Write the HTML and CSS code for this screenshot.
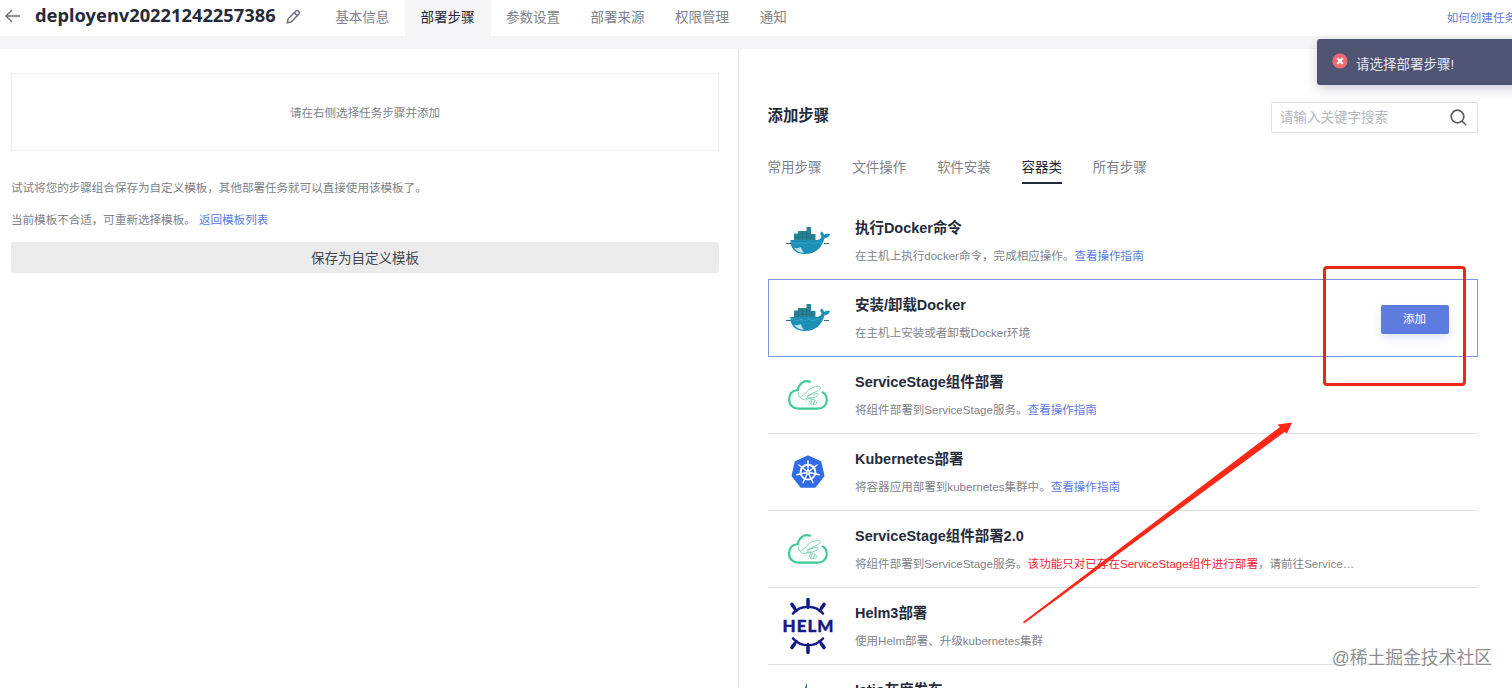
FILE: index.html
```html
<!DOCTYPE html>
<html lang="zh-CN">
<head>
  <meta charset="UTF-8">
  <meta name="viewport" content="width=device-width, initial-scale=1.0">
  <title>部署步骤</title>
  <link rel="stylesheet" href="styles.css">
</head>
<body>
  <!-- shared icons -->
  <svg width="0" height="0" class="sprite">
    <symbol id="docker" viewBox="0 0 44 28">
      <path fill="#2b8496" d="M8 14V6.500h4V4h8.500V0h4.500v7h4.500v7z"/>
      <path stroke="#1b6a80" stroke-width=".6" fill="none" d="M8 10.200h21M12 7h13M12.200 7v6M16.300 4v9M20.500 4v9M25 7v6"/>
      <path fill="#1c8fb8" d="M4.500 13h25c4 0 6-1.500 6-4-1.500-1.500-1.600-3-.2-4.500 1.800.8 2.500 2 2.700 3.500 1.700-1.200 4-1.500 6-.8-.9 2.500-3 3.800-5.500 4C36 20 30.500 27 19 27 9 27 4 21 4.500 13z"/>
      <path fill="#c3e6ee" d="M8 20.800c3 .8 5 .2 7-.5.500 2 1.500 4 3 5.500-4.500 0-7.700-2-10-5z"/>
      <path stroke="#3c6673" stroke-width="1" fill="none" d="M0 16.500h5M38 16.500h5"/>
      <path stroke="#46adc8" stroke-width=".6" fill="none" d="M5 16q2-1.200 4 0t4 0 4 0 4 0 4 0 4 0 4 0 4-.5"/>
    </symbol>
    <symbol id="cloud" viewBox="0 0 40 30">
      <path fill="none" stroke="#3fca95" stroke-width="2.200" stroke-linecap="round" d="M22 1.700C16-.5 10.500 4 10 10 4.500 10.500 1.100 14 1.100 19.500c0 5.500 3.900 9.200 9.400 9.200h19c5.500 0 9.300-3.700 9.300-8.700 0-3.500-1.500-6-4-7.600"/>
      <g fill="none" stroke="#6fd3ad" stroke-width=".9">
        <path d="M12.500 17.500C17 14.500 20 9 25 7.200c4-1.300 8-.7 7.500 1-.6 2.500-9 4.800-13.500 8.300M12.500 17.500c-1.500-1-2.500-3-1.800-5.500M12.500 17.500l-2-1.500M19 16.500c4-2 9-3.500 11-2.700 1.500 1.500-3.500 4.500-8 4.200"/>
        <path d="M12.500 17.500c1 2 3 2.500 5 1.500 2-1.500 4-1.500 5.500 0M17 21.500c2-3 5.500-4 7.500-2.500M21 21.500c2-3.500 8-2 7.700 2-2.200 2-7 1.500-7.700-2zM24 20l-1.200 4M26.600 20.500l-1.200 4.200"/>
      </g>
    </symbol>
    <symbol id="k8s" viewBox="0 0 34 34">
      <path fill="#326ce5" stroke="#326ce5" stroke-width="2.500" stroke-linejoin="round" d="M17 1.700 29.200 7.500l3 13.200L23.800 31.500H10.200L1.800 20.700l3-13.200z"/>
      <g fill="none" stroke="#fff">
        <circle cx="17" cy="17.200" r="7.400" stroke-width="1.900"/>
        <path stroke-width="1.400" stroke-linecap="round" d="M17 17.200V5.700M17 17.200l9-7.200M17 17.200l11.200 2.600M17 17.200l5 10.400M17 17.200l-5 10.400M17 17.200 5.800 19.800M17 17.200 8 10"/>
      </g>
      <circle cx="17" cy="17.200" r="2" fill="#fff"/><circle cx="17" cy="17.200" r=".8" fill="#326ce5"/>
    </symbol>
  </svg>

  <header class="header">
    <svg class="back" width="16" height="14" viewBox="0 0 16 14"><path d="M7 1 1 7l6 6M1 7h14"/></svg>
    <h1 class="task-name">deployenv20221242257386</h1>
    <svg class="edit" width="15" height="15" viewBox="0 0 15 15"><path d="M1.200 13.800 2 10 10 2a1.500 1.500 0 0 1 2.100 0l.9.900A1.500 1.500 0 0 1 13 5l-8 8zM8.300 3.700l3 3"/></svg>
    <nav class="nav">
      <a class="nav-item">基本信息</a>
      <a class="nav-item active">部署步骤</a>
      <a class="nav-item">参数设置</a>
      <a class="nav-item">部署来源</a>
      <a class="nav-item">权限管理</a>
      <a class="nav-item">通知</a>
    </nav>
    <a class="help">如何创建任务</a>
  </header>

  <main class="main">
    <section class="left">
      <div class="empty">请在右侧选择任务步骤并添加</div>
      <p class="tip">试试将您的步骤组合保存为自定义模板，其他部署任务就可以直接使用该模板了。</p>
      <p class="tip">当前模板不合适，可重新选择模板。 <a class="link">返回模板列表</a></p>
      <button class="save">保存为自定义模板</button>
    </section>

    <section class="right">
      <div class="right-head">
        <h2 class="title">添加步骤</h2>
        <div class="search">
          <span>请输入关键字搜索</span>
          <svg width="17" height="17" viewBox="0 0 17 17"><circle cx="7.500" cy="7.500" r="6.300"/><path d="m12 12 4 4"/></svg>
        </div>
      </div>
      <div class="tabs">
        <a class="tab">常用步骤</a>
        <a class="tab">文件操作</a>
        <a class="tab">软件安装</a>
        <a class="tab active">容器类</a>
        <a class="tab">所有步骤</a>
      </div>

      <div class="steps">
        <div class="step">
          <div class="icon"><svg width="44" height="28"><use href="#docker"/></svg></div>
          <div class="info">
            <h3>执行Docker命令</h3>
            <p>在主机上执行docker命令，完成相应操作。<a class="link">查看操作指南</a></p>
          </div>
        </div>
        <div class="step selected">
          <div class="icon"><svg width="44" height="28"><use href="#docker"/></svg></div>
          <div class="info">
            <h3>安装/卸载Docker</h3>
            <p>在主机上安装或者卸载Docker环境</p>
          </div>
          <button class="add">添加</button>
        </div>
        <div class="step">
          <div class="icon"><svg width="40" height="30"><use href="#cloud"/></svg></div>
          <div class="info">
            <h3>ServiceStage组件部署</h3>
            <p>将组件部署到ServiceStage服务。<a class="link">查看操作指南</a></p>
          </div>
        </div>
        <div class="step">
          <div class="icon"><svg width="34" height="34"><use href="#k8s"/></svg></div>
          <div class="info">
            <h3>Kubernetes部署</h3>
            <p>将容器应用部署到kubernetes集群中。<a class="link">查看操作指南</a></p>
          </div>
        </div>
        <div class="step">
          <div class="icon"><svg width="40" height="30"><use href="#cloud"/></svg></div>
          <div class="info">
            <h3>ServiceStage组件部署2.0</h3>
            <p>将组件部署到ServiceStage服务。<span class="warn">该功能只对已存在ServiceStage组件进行部署</span>，请前往Service…</p>
          </div>
        </div>
        <div class="step">
          <div class="icon">
            <svg width="52" height="58" viewBox="0 0 52 58">
              <g fill="none" stroke="#141c85" stroke-linecap="round">
                <path stroke-width="2.600" d="M11 16.500a20 20 0 0 1 30 0M11 41.500a20 20 0 0 0 30 0"/>
                <path stroke-width="3.600" d="M26 2.500v5M10 7.500l2.500 3.500M42 7.500 39.500 11M26 55.500v-5M10 50.500l2.500-3.500M42 50.500 39.500 47"/>
                <path stroke-width="2.400" d="M26 7v4M12.500 11l2 3M39.500 11l-2 3M26 51v-4M12.500 47l2-3M39.500 47l-2-3"/>
              </g>
              <text class="helm-text" x="0.500" y="35" textLength="51">HELM</text>
            </svg>
          </div>
          <div class="info">
            <h3>Helm3部署</h3>
            <p>使用Helm部署、升级kubernetes集群</p>
          </div>
        </div>
        <div class="step">
          <div class="icon"><svg width="40" height="40" viewBox="0 0 40 40"><path fill="#2f6f9f" d="M19 0v26H8zM20.500 9v18H30zM8 30h22l-9 5z"/></svg></div>
          <div class="info">
            <h3>Istio灰度发布</h3>
          </div>
        </div>
      </div>
    </section>
  </main>

  <div class="toast">
    <svg width="16" height="16" viewBox="0 0 16 16"><circle cx="8" cy="8" r="7.600" fill="#ee6a70"/><path d="m5.300 5.300 5.400 5.400M10.700 5.300l-5.400 5.400" stroke="#fff" stroke-width="2"/></svg>
    <span>请选择部署步骤!</span>
  </div>

  <div class="mark-box"></div>
  <svg class="mark-arrow" width="270" height="202" viewBox="0 0 270 202"><path d="M0 200 257 5 254.500 2.500 269 .5 264 11.500 261.500 10 1 201.500z"/></svg>
  <div class="watermark">@稀土掘金技术社区</div>
</body>
</html>
```
FILE: styles.css
```css
* {
  box-sizing: border-box;
}
body {
  margin: 0;
  height: 688px;
  overflow: hidden;
  position: relative;
  background: #f5f5f7;
  font-family: "Liberation Sans", "Noto Sans CJK SC", sans-serif;
  font-size: 11.55px;
  color: #80838a;
}
h1, h2, h3, p {
  margin: 0;
}
button {
  border: 0;
  padding: 0;
  font-family: inherit;
}
.sprite {
  position: absolute;
}
.link {
  color: #5e7ce0;
}

/* header */
.header {
  display: flex;
  align-items: center;
  height: 36px;
  padding-left: 5px;
  background: #fff;
  white-space: nowrap;
}
.header svg {
  fill: none;
  stroke: #6c707a;
  stroke-width: 1.3;
  flex: none;
  margin-bottom: 4px;
}
.header .edit {
  stroke-width: 1.5;
  margin-bottom: 3px;
}
.task-name {
  width: 241px;
  margin: 0 10px 7px 14px;
  font: bold 18.300px/24px "Noto Sans", sans-serif;
  color: #252b3a;
}
.nav {
  display: flex;
  margin-left: 19px;
}
.nav-item {
  padding: 0 15.300px;
  height: 36px;
  line-height: 35px;
  font-size: 13.500px;
}
.nav-item.active {
  background: #f5f5f7;
  color: #252b3a;
  padding: 0 16px;
}
.help {
  margin-left: auto;
  margin-right: -4px;
  padding-bottom: 2px;
  color: #5e7ce0;
}

/* panes */
.main {
  display: flex;
  height: 639px;
  margin-top: 13px;
  background: #fff;
}
.left {
  width: 739px;
  padding: 24px 19px 0 11px;
  border-right: 1px solid #dfe1e6;
}
.empty {
  height: 78px;
  line-height: 78px;
  margin-bottom: 21px;
  border: 1px solid #eff0f2;
  text-align: center;
}
.tip {
  height: 32px;
  line-height: 32px;
}
.save {
  display: block;
  width: 100%;
  height: 31px;
  margin-top: 6px;
  padding-bottom: 1px;
  border-radius: 3px;
  background: #ebebeb;
  font-size: 13.500px;
  color: #43464e;
}
.right {
  flex: 1;
  padding: 53px 34px 0 28.500px;
  overflow: hidden;
}
.right-head {
  display: flex;
  justify-content: space-between;
}
.title {
  font-size: 15.400px;
  line-height: 28px;
  color: #252b3a;
}
.search {
  display: flex;
  align-items: center;
  justify-content: space-between;
  width: 207px;
  height: 31px;
  padding: 0 10px 0 8px;
  border: 1px solid #dfe1e6;
  border-radius: 2px;
  font-size: 13.500px;
  line-height: 27px;
  color: #b4b7bd;
}
.search span {
  padding-bottom: 1px;
}
.search svg {
  fill: none;
  stroke: #5a5e67;
  stroke-width: 1.700;
}
.tabs {
  display: flex;
  gap: 30.700px;
  margin-top: 20px;
  font-size: 13.500px;
}
.tab {
  height: 31px;
  line-height: 30px;
}
.tab.active {
  color: #252b3a;
  border-bottom: 2px solid #252b3a;
}

/* step list */
.steps {
  margin-top: 19px;
}
.step {
  display: flex;
  height: 77px;
  border-bottom: 1px solid #dfe1e6;
}
.step:first-child {
  border-bottom-color: transparent;
}
.step.selected {
  position: relative;
  height: 78px;
  margin: -1px 0 0;
  border: 1px solid #7f99e0;
}
.icon {
  display: flex;
  align-items: center;
  justify-content: center;
  width: 80px;
  height: 76px;
  flex: none;
}
.selected .icon {
  margin-left: -1px;
}
.info {
  flex: 1;
  padding: 13px 0 0 7.500px;
  white-space: nowrap;
}
.info h3 {
  height: 24px;
  font-size: 14.460px;
  line-height: 24px;
  color: #252b3a;
}
.info p {
  margin-top: 4px;
  height: 24px;
  line-height: 24px;
}
.warn {
  color: #f5222d;
}
.add {
  width: 68px;
  height: 29px;
  margin: 25px 28.500px 0 0;
  padding-bottom: 3px;
  border-radius: 2px;
  background: #5e7ce0;
  box-shadow: 0 4px 8px rgba(94, 124, 224, .2);
  color: #fff;
  font-size: 11.550px;
}
.helm-text {
  font: 900 17px "Lato", sans-serif;
  fill: #141c85;
  stroke: #141c85;
  stroke-width: .4;
}

/* error message */
.toast {
  position: absolute;
  top: 39px;
  left: 1317px;
  width: 205px;
  height: 46px;
  display: flex;
  gap: 8px;
  padding: 14px 0 0 15px;
  border-radius: 3px;
  background: #4f5473;
  box-shadow: 0 4px 12px rgba(40, 45, 70, .22);
  font-size: 13.500px;
  line-height: 24px;
  color: #e4e6ee;
}

/* annotations */
.mark-box {
  position: absolute;
  left: 1323px;
  top: 266px;
  width: 143px;
  height: 120px;
  border: 3px solid #ee2617;
  border-radius: 4px;
}
.mark-arrow {
  position: absolute;
  left: 1023px;
  top: 422px;
  fill: #fa2818;
}
.watermark {
  position: absolute;
  right: 20px;
  bottom: 17px;
  font: 17.800px/26px "Liberation Sans", "Noto Sans CJK SC", sans-serif;
  color: #8f8f8f;
  text-shadow: 0 0 2px #fff;
}
```
